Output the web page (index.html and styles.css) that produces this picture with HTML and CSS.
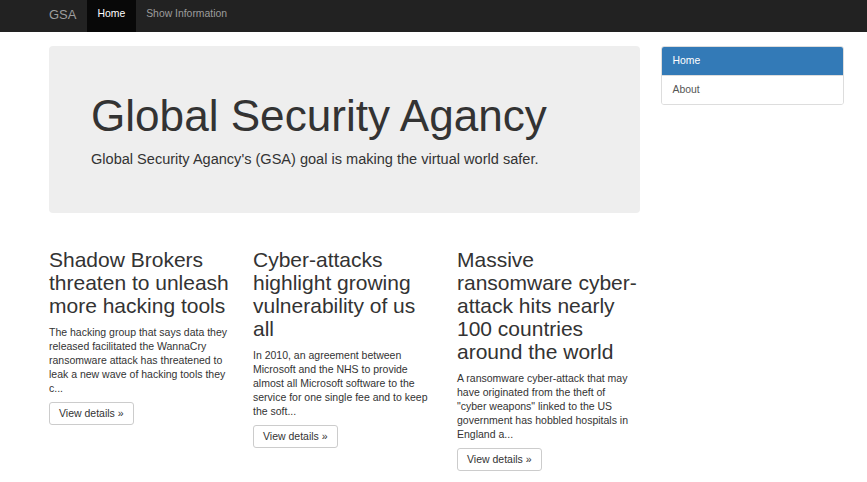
FILE: index.html
```html
<!DOCTYPE html>
<html lang="en">
<head>
<meta charset="utf-8">
<title>GSA</title>
<link rel="stylesheet" href="styles.css">
</head>
<body>
<nav class="navbar">
  <a class="brand" href="#">GSA</a>
  <ul class="nav">
    <li><a class="nav-link active" href="#">Home</a></li>
    <li><a class="nav-link" href="#">Show Information</a></li>
  </ul>
</nav>
<div class="page">
  <main class="main">
    <section class="jumbotron">
      <h1>Global Security Agancy</h1>
      <p>Global Security Agancy's (GSA) goal is making the virtual world safer.</p>
    </section>
    <div class="articles">
      <article class="article">
        <h2>Shadow Brokers threaten to unleash more hacking tools</h2>
        <p>The hacking group that says data they released facilitated the WannaCry ransomware attack has threatened to leak a new wave of hacking tools they c...</p>
        <a class="btn" href="#">View details &raquo;</a>
      </article>
      <article class="article">
        <h2>Cyber-attacks highlight growing vulnerability of us all</h2>
        <p>In 2010, an agreement between Microsoft and the NHS to provide almost all Microsoft software to the service for one single fee and to keep the soft...</p>
        <a class="btn" href="#">View details &raquo;</a>
      </article>
      <article class="article">
        <h2>Massive ransomware cyber-attack hits nearly 100 countries around the world</h2>
        <p>A ransomware cyber-attack that may have originated from the theft of "cyber weapons" linked to the US government has hobbled hospitals in England a...</p>
        <a class="btn" href="#">View details &raquo;</a>
      </article>
    </div>
  </main>
  <aside class="sidebar">
    <div class="list-group">
      <a class="list-item active" href="#">Home</a>
      <a class="list-item" href="#">About</a>
    </div>
  </aside>
</div>
</body>
</html>
```
FILE: styles.css
```css
* { box-sizing: border-box; }
html, body { margin: 0; padding: 0; }
body {
  font-family: "Liberation Sans", Arial, Helvetica, sans-serif;
  font-size: 10.4px;
  line-height: 14px;
  color: #333;
  background: #fff;
}
a { text-decoration: none; }

.navbar {
  height: 32px;
  background: #222;
  display: flex;
  align-items: flex-start;
  padding-left: 38.5px;
}
.brand {
  display: block;
  height: 32px;
  padding: 7.5px 10.5px 0;
  font-size: 13px;
  line-height: 14px;
  color: #9d9d9d;
}
.nav {
  list-style: none;
  margin: 0;
  padding: 0;
  display: flex;
}
.nav-link {
  display: block;
  height: 32px;
  padding: 6.5px 10.5px 0;
  font-size: 10.4px;
  line-height: 14px;
  color: #9d9d9d;
}
.nav-link.active {
  background: #080808;
  color: #fff;
}

.page {
  display: flex;
  gap: 21px;
  padding-left: 49px;
  margin-top: 14px;
}
.main { width: 591px; }
.sidebar { width: 183px; }

.jumbotron {
  background: #eee;
  border-radius: 4px;
  padding: 32px 42px 33px;
  margin-bottom: 21px;
}
.jumbotron h1 {
  margin: 14px 0 7px;
  font-size: 44.1px;
  line-height: 48.5px;
  font-weight: 500;
  color: #333;
}
.jumbotron p {
  margin: 0 0 10.5px;
  font-size: 14.55px;
  line-height: 22px;
}

.articles {
  display: flex;
  gap: 21px;
  align-items: flex-start;
}
.article { width: 183px; }
.article h2 {
  margin: 14px 0 7.5px;
  font-size: 21px;
  line-height: 23px;
  font-weight: 500;
}
.article p {
  margin: 0 3px 7px 0;
  font-size: 10.5px;
}
.btn {
  display: inline-block;
  padding: 3.5px 9px;
  border: 1px solid #ccc;
  border-radius: 3px;
  color: #333;
  background: #fff;
  font-size: 10.5px;
  line-height: 14px;
}

.list-group {
  border: 1px solid #ddd;
  border-radius: 3px;
  overflow: hidden;
}
.list-item {
  display: block;
  padding: 7px 10.5px;
  line-height: 14px;
  color: #555;
  background: #fff;
}
.list-item + .list-item { border-top: 1px solid #ddd; }
.list-item.active {
  background: #337ab7;
  color: #fff;
  margin: -1px -1px 0;
  padding: 8px 11.5px 7px;
}
```
